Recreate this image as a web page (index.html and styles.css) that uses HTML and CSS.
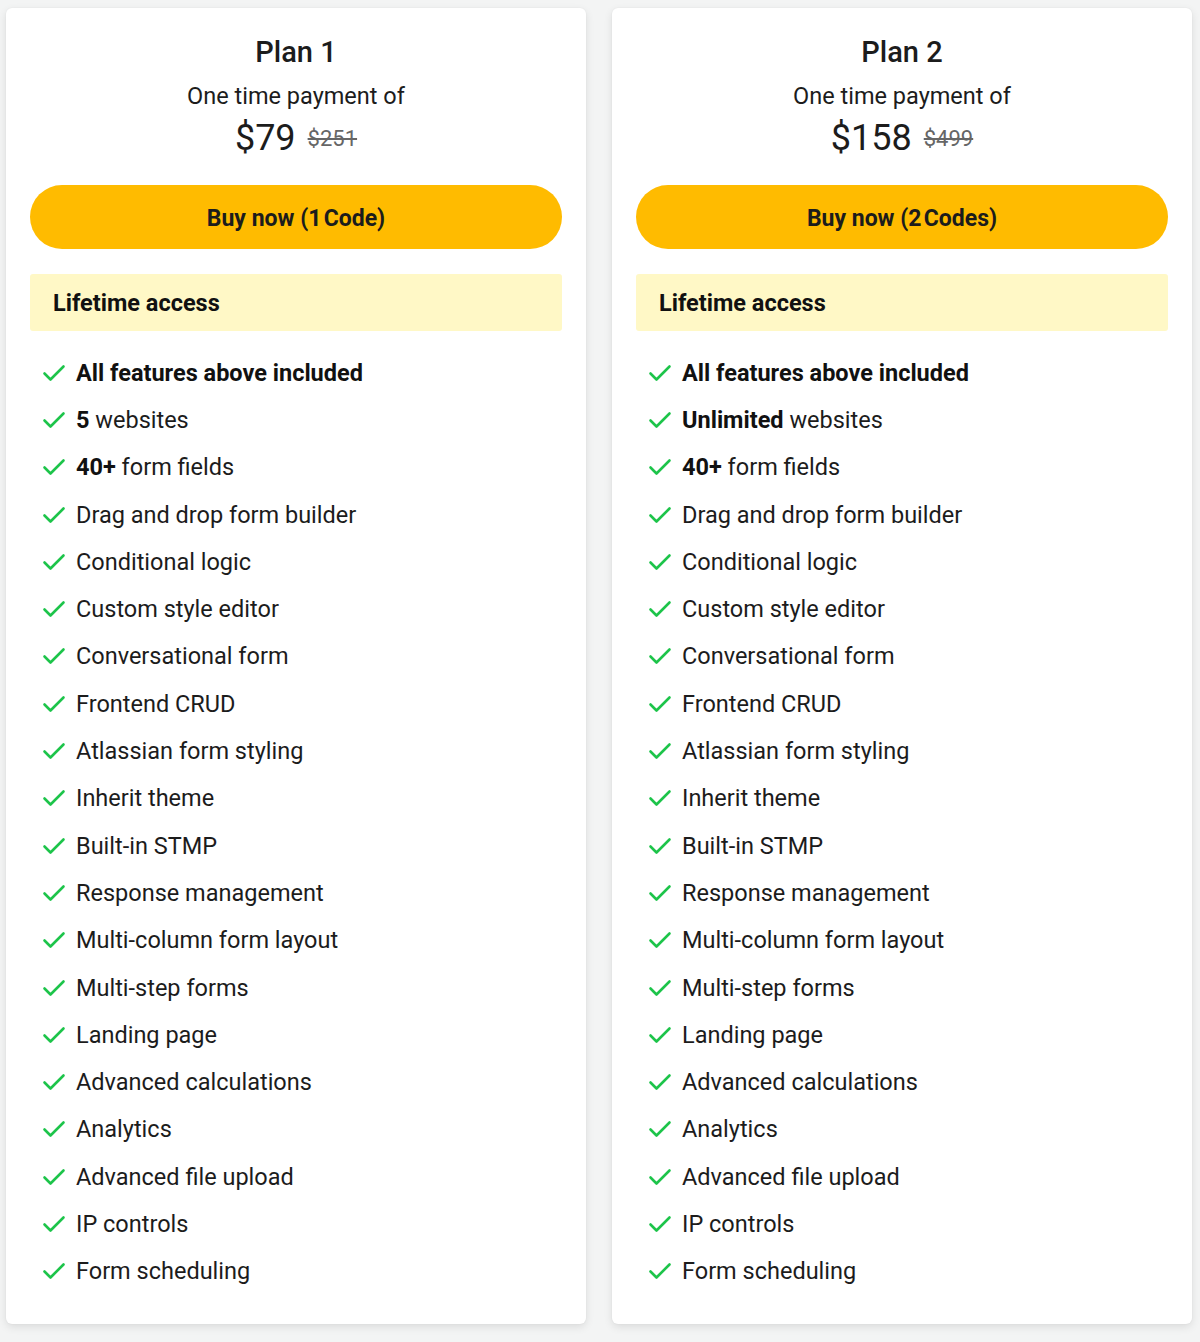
FILE: index.html
```html
<!DOCTYPE html>
<html lang="en">
<head>
<meta charset="utf-8">
<title>Plans</title>
<link rel="stylesheet" href="styles.css">
</head>
<body>
<div class="plans">
  <section class="card">
    <h2 class="title">Plan 1</h2>
    <p class="sub">One time payment of</p>
    <p class="price"><span class="now">$79</span><s class="was">$251</s></p>
    <a class="buy" href="#">Buy now (1&#8202;Code)</a>
    <div class="access">Lifetime access</div>
    <ul class="features">
      <li><svg class="chk" viewBox="0 0 24 24"><path d="M2.5 12.5l6 6L21.5 5.5"/></svg><span><b>All features above included</b></span></li>
      <li><svg class="chk" viewBox="0 0 24 24"><path d="M2.5 12.5l6 6L21.5 5.5"/></svg><span><b>5</b> websites</span></li>
      <li><svg class="chk" viewBox="0 0 24 24"><path d="M2.5 12.5l6 6L21.5 5.5"/></svg><span><b>40+</b> form fields</span></li>
      <li><svg class="chk" viewBox="0 0 24 24"><path d="M2.5 12.5l6 6L21.5 5.5"/></svg><span>Drag and drop form builder</span></li>
      <li><svg class="chk" viewBox="0 0 24 24"><path d="M2.5 12.5l6 6L21.5 5.5"/></svg><span>Conditional logic</span></li>
      <li><svg class="chk" viewBox="0 0 24 24"><path d="M2.5 12.5l6 6L21.5 5.5"/></svg><span>Custom style editor</span></li>
      <li><svg class="chk" viewBox="0 0 24 24"><path d="M2.5 12.5l6 6L21.5 5.5"/></svg><span>Conversational form</span></li>
      <li><svg class="chk" viewBox="0 0 24 24"><path d="M2.5 12.5l6 6L21.5 5.5"/></svg><span>Frontend CRUD</span></li>
      <li><svg class="chk" viewBox="0 0 24 24"><path d="M2.5 12.5l6 6L21.5 5.5"/></svg><span>Atlassian form styling</span></li>
      <li><svg class="chk" viewBox="0 0 24 24"><path d="M2.5 12.5l6 6L21.5 5.5"/></svg><span>Inherit theme</span></li>
      <li><svg class="chk" viewBox="0 0 24 24"><path d="M2.5 12.5l6 6L21.5 5.5"/></svg><span>Built-in STMP</span></li>
      <li><svg class="chk" viewBox="0 0 24 24"><path d="M2.5 12.5l6 6L21.5 5.5"/></svg><span>Response management</span></li>
      <li><svg class="chk" viewBox="0 0 24 24"><path d="M2.5 12.5l6 6L21.5 5.5"/></svg><span>Multi-column form layout</span></li>
      <li><svg class="chk" viewBox="0 0 24 24"><path d="M2.5 12.5l6 6L21.5 5.5"/></svg><span>Multi-step forms</span></li>
      <li><svg class="chk" viewBox="0 0 24 24"><path d="M2.5 12.5l6 6L21.5 5.5"/></svg><span>Landing page</span></li>
      <li><svg class="chk" viewBox="0 0 24 24"><path d="M2.5 12.5l6 6L21.5 5.5"/></svg><span>Advanced calculations</span></li>
      <li><svg class="chk" viewBox="0 0 24 24"><path d="M2.5 12.5l6 6L21.5 5.5"/></svg><span>Analytics</span></li>
      <li><svg class="chk" viewBox="0 0 24 24"><path d="M2.5 12.5l6 6L21.5 5.5"/></svg><span>Advanced file upload</span></li>
      <li><svg class="chk" viewBox="0 0 24 24"><path d="M2.5 12.5l6 6L21.5 5.5"/></svg><span>IP controls</span></li>
      <li><svg class="chk" viewBox="0 0 24 24"><path d="M2.5 12.5l6 6L21.5 5.5"/></svg><span>Form scheduling</span></li>
    </ul>
  </section>
  <section class="card">
    <h2 class="title">Plan 2</h2>
    <p class="sub">One time payment of</p>
    <p class="price"><span class="now">$158</span><s class="was">$499</s></p>
    <a class="buy" href="#">Buy now (2&#8202;Codes)</a>
    <div class="access">Lifetime access</div>
    <ul class="features">
      <li><svg class="chk" viewBox="0 0 24 24"><path d="M2.5 12.5l6 6L21.5 5.5"/></svg><span><b>All features above included</b></span></li>
      <li><svg class="chk" viewBox="0 0 24 24"><path d="M2.5 12.5l6 6L21.5 5.5"/></svg><span><b>Unlimited</b> websites</span></li>
      <li><svg class="chk" viewBox="0 0 24 24"><path d="M2.5 12.5l6 6L21.5 5.5"/></svg><span><b>40+</b> form fields</span></li>
      <li><svg class="chk" viewBox="0 0 24 24"><path d="M2.5 12.5l6 6L21.5 5.5"/></svg><span>Drag and drop form builder</span></li>
      <li><svg class="chk" viewBox="0 0 24 24"><path d="M2.5 12.5l6 6L21.5 5.5"/></svg><span>Conditional logic</span></li>
      <li><svg class="chk" viewBox="0 0 24 24"><path d="M2.5 12.5l6 6L21.5 5.5"/></svg><span>Custom style editor</span></li>
      <li><svg class="chk" viewBox="0 0 24 24"><path d="M2.5 12.5l6 6L21.5 5.5"/></svg><span>Conversational form</span></li>
      <li><svg class="chk" viewBox="0 0 24 24"><path d="M2.5 12.5l6 6L21.5 5.5"/></svg><span>Frontend CRUD</span></li>
      <li><svg class="chk" viewBox="0 0 24 24"><path d="M2.5 12.5l6 6L21.5 5.5"/></svg><span>Atlassian form styling</span></li>
      <li><svg class="chk" viewBox="0 0 24 24"><path d="M2.5 12.5l6 6L21.5 5.5"/></svg><span>Inherit theme</span></li>
      <li><svg class="chk" viewBox="0 0 24 24"><path d="M2.5 12.5l6 6L21.5 5.5"/></svg><span>Built-in STMP</span></li>
      <li><svg class="chk" viewBox="0 0 24 24"><path d="M2.5 12.5l6 6L21.5 5.5"/></svg><span>Response management</span></li>
      <li><svg class="chk" viewBox="0 0 24 24"><path d="M2.5 12.5l6 6L21.5 5.5"/></svg><span>Multi-column form layout</span></li>
      <li><svg class="chk" viewBox="0 0 24 24"><path d="M2.5 12.5l6 6L21.5 5.5"/></svg><span>Multi-step forms</span></li>
      <li><svg class="chk" viewBox="0 0 24 24"><path d="M2.5 12.5l6 6L21.5 5.5"/></svg><span>Landing page</span></li>
      <li><svg class="chk" viewBox="0 0 24 24"><path d="M2.5 12.5l6 6L21.5 5.5"/></svg><span>Advanced calculations</span></li>
      <li><svg class="chk" viewBox="0 0 24 24"><path d="M2.5 12.5l6 6L21.5 5.5"/></svg><span>Analytics</span></li>
      <li><svg class="chk" viewBox="0 0 24 24"><path d="M2.5 12.5l6 6L21.5 5.5"/></svg><span>Advanced file upload</span></li>
      <li><svg class="chk" viewBox="0 0 24 24"><path d="M2.5 12.5l6 6L21.5 5.5"/></svg><span>IP controls</span></li>
      <li><svg class="chk" viewBox="0 0 24 24"><path d="M2.5 12.5l6 6L21.5 5.5"/></svg><span>Form scheduling</span></li>
    </ul>
  </section>
</div>
</body>
</html>
```

FILE: styles.css
```css
* { box-sizing: border-box; }
html, body { margin: 0; padding: 0; }
body {
  background: #f3f4f4;
  font-family: Roboto, "Liberation Sans", Arial, sans-serif;
  color: #1c1c1c;
  width: 1200px;
  height: 1342px;
  overflow: hidden;
}
.plans {
  display: grid;
  grid-template-columns: 580px 580px;
  column-gap: 26px;
  padding: 8px 8px 0 6px;
}
.card {
  background: #fff;
  border-radius: 6px;
  height: 1316px;
  padding: 24px 24px 0 24px;
  box-shadow: 0 3px 8px rgba(0,0,0,0.10), 0 0 2px rgba(0,0,0,0.06);
  display: flex;
  flex-direction: column;
  align-items: stretch;
}
.title {
  margin: 0;
  font-size: 29px;
  line-height: 40px;
  font-weight: 500;
  text-align: center;
  color: #1c1c1c;
}
.sub {
  margin: 9px 0 0;
  font-size: 23.5px;
  line-height: 30px;
  text-align: center;
  color: #1c1c1c;
}
.price {
  margin: 5px 0 0;
  height: 44px;
  display: flex;
  justify-content: center;
  align-items: center;
  gap: 12px;
}
.now {
  font-size: 36px;
  line-height: 44px;
  color: #1c1c1c;
}
.was {
  font-size: 22px;
  line-height: 44px;
  color: #666;
  text-decoration-thickness: 1.5px;
  position: relative;
  top: 1px;
}
.buy {
  margin-top: 25px;
  height: 64px;
  border-radius: 32px;
  background: #ffbb00;
  display: flex;
  align-items: center;
  justify-content: center;
  font-size: 23px;
  font-weight: 700;
  color: #1c1c1c;
  text-decoration: none;
  padding-top: 2px;
}
.access {
  margin-top: 25px;
  height: 57px;
  background: #fff8c6;
  border-radius: 3px;
  padding: 0 23px;
  display: flex;
  align-items: center;
  font-size: 23.5px;
  font-weight: 700;
  color: #111;
}
.features {
  list-style: none;
  margin: 18px 0 0;
  padding: 0;
}
.features li {
  height: 47.3px;
  display: flex;
  align-items: center;
  padding-left: 12px;
  font-size: 23.5px;
  color: #1c1c1c;
}
.features li b { font-weight: 700; color: #111; }
.chk {
  width: 24px;
  height: 24px;
  margin-right: 10px;
  fill: none;
  stroke: #1dc44a;
  stroke-width: 2.6;
  stroke-linecap: round;
  stroke-linejoin: round;
  flex: none;
}
```
